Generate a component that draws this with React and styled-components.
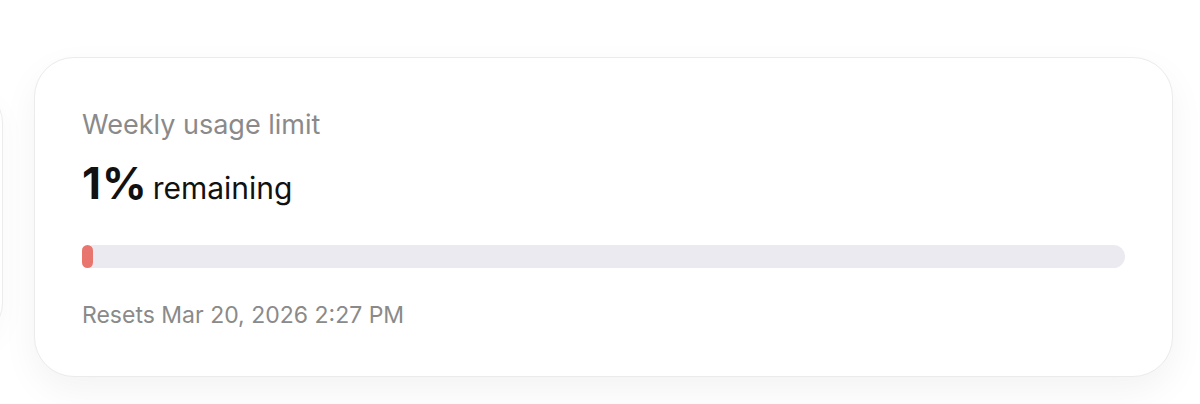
import React from "react";
import styled, { createGlobalStyle } from "styled-components";

const Global = createGlobalStyle`
  html, body { margin: 0; padding: 0; background: #ffffff; }
  body { font-family: Inter, "Helvetica Neue", Arial, sans-serif; -webkit-font-smoothing: antialiased; }
  #root { width: 1200px; height: 404px; overflow: hidden; }
`;

const Track = styled.div`
  display: flex;
  align-items: center;
  gap: 31px;
  padding-top: 57px;
  margin-left: -397px;
`;

const GhostCard = styled.div`
  flex: 0 0 400px;
  height: 252px;
  box-sizing: border-box;
  border: 1px solid #ececec;
  border-radius: 36px;
  background: #fff;
  box-shadow: 0 10px 30px rgba(0, 0, 0, 0.03);
  margin-top: -8px;
`;

const Card = styled.section`
  flex: 0 0 1139px;
  height: 320px;
  box-sizing: border-box;
  border: 1px solid #ebebeb;
  border-radius: 40px;
  background: #fff;
  box-shadow: 0 14px 36px rgba(0, 0, 0, 0.05);
  padding: 51px 47px 0 47px;
  display: flex;
  flex-direction: column;
`;

const Label = styled.div`
  font-size: 27px;
  line-height: 32px;
  color: #8a8a8a;
`;

const Value = styled.div`
  margin-top: 19px;
  height: 46px;
  display: flex;
  align-items: baseline;
  gap: 5px;
  color: #111;
`;

const Big = styled.span`
  font-size: 44px;
  font-weight: 700;
  line-height: 46px;
  letter-spacing: 1px;
`;

const Unit = styled.span`
  font-size: 30px;
  font-weight: 400;
  line-height: 46px;
`;

const Bar = styled.div`
  margin-top: 39px;
  height: 23px;
  border-radius: 12px;
  background: #ebeaf1;
  display: flex;
`;

const Fill = styled.div`
  height: 100%;
  border-radius: 6px;
  background: #e8756e;
  min-width: 11px;
`;

const Reset = styled.div`
  margin-top: 33px;
  font-size: 23px;
  line-height: 28px;
  color: #8a8a8a;
`;

export default function App() {
  const pct = 1;
  return (
    <>
      <Global />
      <Track>
        <GhostCard />
        <Card>
          <Label>Weekly usage limit</Label>
          <Value>
            <Big>{pct}%</Big>
            <Unit>remaining</Unit>
          </Value>
          <Bar>
            <Fill style={{ width: `${pct}%` }} />
          </Bar>
          <Reset>Resets Mar 20, 2026 2:27 PM</Reset>
        </Card>
      </Track>
    </>
  );
}
